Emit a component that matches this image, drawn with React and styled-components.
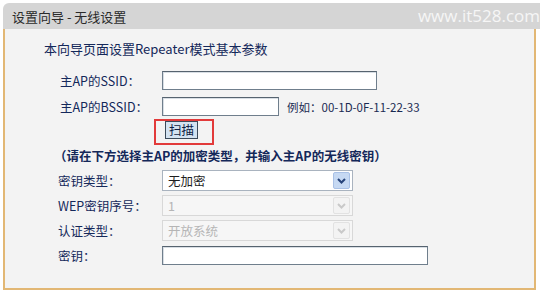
import styled, { createGlobalStyle } from "styled-components";

const Global = createGlobalStyle`
  html, body { margin: 0; padding: 0; background: #ffffff; }
  body { font-family: "Noto Sans CJK SC", "Liberation Sans", sans-serif; }
`;

const Frame = styled.div`
  width: 537px;
  height: 290px;
  margin-left: 3px;
  display: flex;
  flex-direction: column;
`;

const TitleBar = styled.div`
  height: 26px;
  margin-top: 3px;
  background: #d5d5d5;
  border-radius: 6px 0 0 0;
  display: flex;
  align-items: center;
  justify-content: space-between;
  padding: 0 0 0 9px;
  font-size: 13px;
  color: #2a2a2a;
`;

const Watermark = styled.span`
  color: #f6f6f6;
  font-family: "Open Sans", "Liberation Sans", sans-serif;
  font-size: 17px;
  margin-top: -2px;
`;

const Body = styled.div`
  flex: 1;
  width: 533px;
  box-sizing: border-box;
  background: #f3f3f3;
  border: 2px solid #e2b774;
  border-top: none;
  padding: 10px 0 0 39px;
  color: #14285a;
  font-size: 12px;
`;

const Intro = styled.div`
  font-size: 13px;
  height: 20px;
  line-height: 20px;
  margin-bottom: 11px;
`;

const Form = styled.div`
  display: grid;
  grid-template-columns: 104px auto;
  padding-left: 14px;
  row-gap: 4px;
  align-items: center;
`;

const Label = styled.div`
  font-size: 12.5px;
  line-height: 21px;
  margin-top: ${(p) => p.$shift || 0}px;
  padding-left: ${(p) => p.$indent || 0}px;
`;

const Cell = styled.div`
  display: flex;
  align-items: center;
  gap: 8px;
  min-height: 21px;
  margin-top: ${(p) => p.$shift || 0}px;
`;

const TextInput = styled.div`
  width: ${(p) => p.$w}px;
  height: 19px;
  box-sizing: border-box;
  background: #ffffff;
  border: 1px solid #6f7e8c;
  border-top-color: #56636f;
  box-shadow: inset 1px 1px 0 #d8dee4;
`;

const Hint = styled.span`
  font-size: 11.5px;
  color: #1a2a52;
`;

const ScanCell = styled.div`
  grid-column: 1 / span 2;
  padding-left: 96px;
  margin: -2px 0 -2px;
`;

const RedBox = styled.div`
  display: inline-flex;
  align-items: flex-start;
  padding: 0 14px 4px 9px;
  border: 2px solid #e23a3a;
`;

const Button = styled.div`
  height: 18px;
  box-sizing: border-box;
  padding: 0 3px;
  background: #d4e3f1;
  border: 1px solid #3b4a5a;
  font-size: 12.5px;
  line-height: 16px;
  color: #0e1e44;
`;

const Notice = styled.div`
  grid-column: 1 / span 2;
  font-size: 12.5px;
  font-weight: 600;
  margin: 0 0 1px -4px;
  line-height: 18px;
`;

const Select = styled.div`
  width: 191px;
  height: 21px;
  box-sizing: border-box;
  background: ${(p) => (p.$disabled ? "#f6f6f6" : "#ffffff")};
  border: 1px solid ${(p) => (p.$disabled ? "#d8d8d8" : "#a9b3bf")};
  display: flex;
  align-items: center;
  justify-content: space-between;
  padding: 0 2px 0 5px;
  font-size: 12.5px;
  color: ${(p) => (p.$disabled ? "#b5b5b5" : "#1e1e1e")};
`;

const Arrow = styled.div`
  width: 15px;
  height: 15px;
  border-radius: 2px;
  background: ${(p) => (p.$disabled ? "#f3f3f3" : "#c6d9f3")};
  border: 1px solid ${(p) => (p.$disabled ? "#e2e2e2" : "#a9c1e6")};
  display: flex;
  align-items: center;
  justify-content: center;
`;

function Chevron({ disabled }) {
  return (
    <svg width="9" height="6" viewBox="0 0 9 6">
      <path
        d="M1 1 L4.5 4.5 L8 1"
        fill="none"
        stroke={disabled ? "#c9c9c9" : "#27447a"}
        strokeWidth="2"
      />
    </svg>
  );
}

function Dropdown({ value, disabled }) {
  return (
    <Select $disabled={disabled}>
      <span>{value}</span>
      <Arrow $disabled={disabled}>
        <Chevron disabled={disabled} />
      </Arrow>
    </Select>
  );
}

export default function App() {
  return (
    <>
      <Global />
      <Frame>
        <TitleBar>
          <span>设置向导 - 无线设置</span>
          <Watermark>www.it528.com</Watermark>
        </TitleBar>
        <Body>
          <Intro>本向导页面设置Repeater模式基本参数</Intro>
          <Form>
            <Label $indent={2}>主AP的SSID：</Label>
            <Cell>
              <TextInput $w={215} />
            </Cell>
            <Label $indent={2} $shift={1}>主AP的BSSID：</Label>
            <Cell $shift={1}>
              <TextInput $w={117} />
              <Hint>例如：00-1D-0F-11-22-33</Hint>
            </Cell>
            <ScanCell>
              <RedBox>
                <Button>扫描</Button>
              </RedBox>
            </ScanCell>
            <Notice>（请在下方选择主AP的加密类型，并输入主AP的无线密钥）</Notice>
            <Label>密钥类型：</Label>
            <Cell>
              <Dropdown value="无加密" />
            </Cell>
            <Label>WEP密钥序号：</Label>
            <Cell>
              <Dropdown value="1" disabled />
            </Cell>
            <Label>认证类型：</Label>
            <Cell>
              <Dropdown value="开放系统" disabled />
            </Cell>
            <Label>密钥：</Label>
            <Cell>
              <TextInput $w={266} />
            </Cell>
          </Form>
        </Body>
      </Frame>
    </>
  );
}
